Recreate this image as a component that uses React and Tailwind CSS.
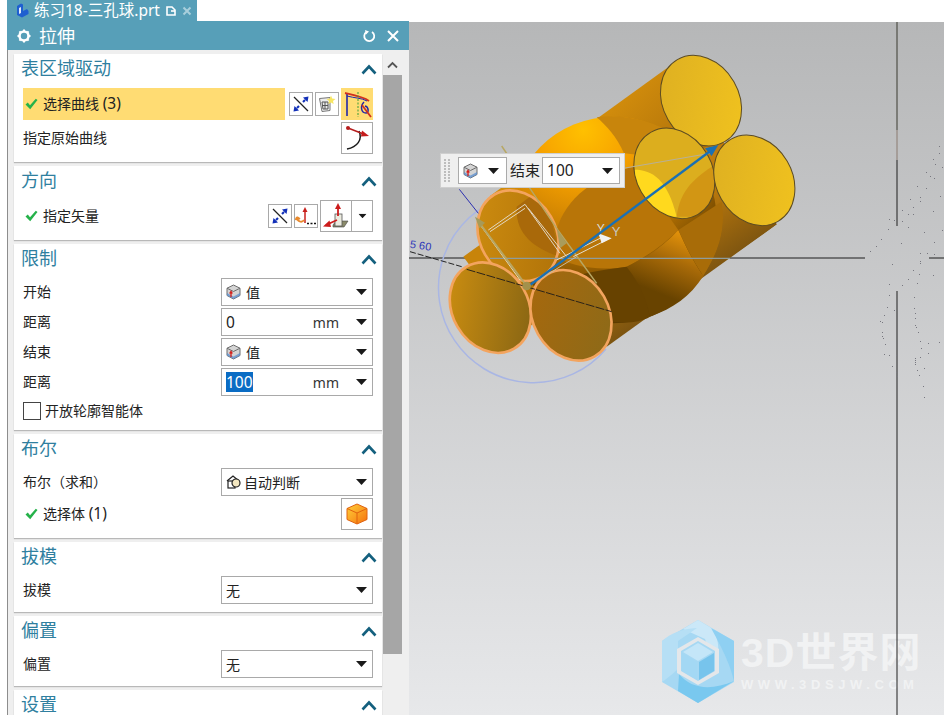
const FONT = { fontFamily: '"Noto Sans","Noto Sans CJK SC",sans-serif' };

function Caret({ className = "" }) {
  return (
    <svg width="11" height="6" viewBox="0 0 11 6" className={className}>
      <path d="M0 0H11L5.5 6Z" fill="#1a1a1a" />
    </svg>
  );
}
function Chevron() {
  return (
    <svg width="16" height="11" viewBox="0 0 16 11">
      <path d="M1.5 9.5L8 2.5L14.5 9.5" fill="none" stroke="#14607e" strokeWidth="2.6" />
    </svg>
  );
}
function Check() {
  return (
    <svg width="13" height="12" viewBox="0 0 13 12" className="shrink-0">
      <path d="M0.5 6.5L2.8 4.6L5 7.2L10.8 0.8L12.5 2L5.2 11.2Z" fill="#25b24a" />
    </svg>
  );
}
function ValueCube() {
  return (
    <svg width="15" height="16" viewBox="0 0 15 16" className="shrink-0">
      <path d="M7.5 1L14 4.2V11.5L7.5 15L1 11.5V4.2Z" fill="#d4d4d4" stroke="#6d6d6d" />
      <path d="M1 4.2L7.5 7.5L14 4.2" fill="none" stroke="#6d6d6d" />
      <path d="M1 11.5L7.5 15L14 11.5L14 9L7.5 12.5L1 9Z" fill="#5b8fd0" opacity="0.75" />
      <path d="M5 13V8M3.6 9.5L5 7.5L6.4 9.5" fill="none" stroke="#d3201c" strokeWidth="1.3" />
    </svg>
  );
}
function ReverseIcon() {
  return (
    <svg width="18" height="18" viewBox="0 0 18 18">
      <path d="M2 2L16 16" stroke="#222" strokeWidth="1.2" />
      <path d="M11 7L13 5" stroke="#1230b8" strokeWidth="2.2" />
      <path d="M7 11L5 13" stroke="#1230b8" strokeWidth="2.2" />
      <path d="M16.5 1.5L15.5 7L11 2.5Z" fill="#1230b8" />
      <path d="M1.5 16.5L2.5 11L7 15.5Z" fill="#1230b8" />
    </svg>
  );
}
function CurveStarIcon() {
  return (
    <svg width="18" height="18" viewBox="0 0 18 18">
      <path d="M1.5 3.5L12 2.5V15.5L4 16.5Z" fill="#ececec" stroke="#777" />
      <path d="M4 7H10V14H5ZM7 7V14M4.5 10.5H10" fill="none" stroke="#555" />
      <path d="M13 0.5L14.2 3.5L17.5 4L15 6L15.7 9L13 7.4L10.3 9L11 6L8.5 4L11.8 3.5Z" fill="#f7e663" />
    </svg>
  );
}
function CurveSelectIcon() {
  return (
    <svg width="30" height="30" viewBox="0 0 30 30">
      <path d="M5 4V27" stroke="#2227a8" strokeWidth="1.6" />
      <path d="M3 4C12 6 22 8 27 12" fill="none" stroke="#d0301f" strokeWidth="1.8" />
      <path d="M5 7C12 9 20 9 25 12" fill="none" stroke="#2227a8" strokeWidth="1" />
      <path d="M16 3V28" stroke="#3b9b38" strokeWidth="1" strokeDasharray="2 1.5" />
      <path d="M22 13C18 17 19 24 24 24C27 24 27 18 23 17" fill="none" stroke="#2227a8" strokeWidth="1.5" />
      <path d="M20 16L29 28" stroke="#d0301f" strokeWidth="1.8" />
    </svg>
  );
}
function OriginCurveIcon() {
  return (
    <svg width="30" height="30" viewBox="0 0 30 30">
      <path d="M5 26C15 24 21 17 17 8" fill="none" stroke="#1c1c1c" strokeWidth="1.5" />
      <path d="M6 5L24 12" stroke="#b51c1c" strokeWidth="1.5" />
      <circle cx="6" cy="5" r="2" fill="#b51c1c" />
      <path d="M20 7.5L27 13L19 13.5Z" fill="#c51c1c" />
    </svg>
  );
}
function InferIcon() {
  return (
    <svg width="22" height="22" viewBox="0 0 22 22">
      <path d="M10 18V4" stroke="#c8201c" strokeWidth="1.5" />
      <path d="M7.5 7L10 2L12.5 7Z" fill="#c8201c" />
      <path d="M2 12C2 17 7 18 9 15M2 12L0.5 15M2 12L5 14" fill="none" stroke="#e8892c" strokeWidth="1.8" />
      <path d="M12 18.5H14M15.5 18.5H17.5M19 18.5H21" stroke="#111" strokeWidth="1.6" />
    </svg>
  );
}
function VectorIcon() {
  return (
    <svg width="28" height="28" viewBox="0 0 28 28">
      <path d="M11 23L14 19H26L22 25H11Z" fill="#8a8a6a" stroke="#444" strokeWidth="0.6" />
      <rect x="13" y="12" width="7" height="12" fill="#ecece0" stroke="#555" strokeWidth="0.8" />
      <path d="M16 14V3" stroke="#cc1c1c" strokeWidth="1.8" />
      <path d="M13 7L16 1L19 7Z" fill="#cc1c1c" />
      <path d="M15 18L4 23" stroke="#cc1c1c" strokeWidth="1.8" />
      <path d="M7.5 18.5L1 24.5L9 25Z" fill="#cc1c1c" />
    </svg>
  );
}
function BoolIcon() {
  return (
    <svg width="15" height="16" viewBox="0 0 15 16" className="shrink-0">
      <path d="M1 7L7 2L13 7V9" fill="none" stroke="#222" strokeWidth="1.3" />
      <rect x="2" y="7" width="7" height="7" fill="#fff" stroke="#222" strokeWidth="1.2" />
      <circle cx="10" cy="9" r="4" fill="#f3e7c0" stroke="#222" strokeWidth="1.2" />
    </svg>
  );
}
function OrangeCube() {
  return (
    <svg width="24" height="24" viewBox="0 0 24 24">
      <defs>
        <linearGradient id="oc" x1="0" y1="0" x2="1" y2="1">
          <stop offset="0" stopColor="#ffd23a" />
          <stop offset="1" stopColor="#f5700d" />
        </linearGradient>
      </defs>
      <path d="M12 2L22 6.5V17.5L12 22L2 17.5V6.5Z" fill="url(#oc)" stroke="#e0620f" strokeLinejoin="round" />
      <path d="M2 6.5L12 11L22 6.5M12 11V22" fill="none" stroke="#e0620f" />
    </svg>
  );
}

function Btn({ children, w = "w-6", h = "h-6" }) {
  return (
    <div className={`${w} ${h} border border-[#a9a9a9] bg-white flex items-center justify-center shrink-0`}>
      {children}
    </div>
  );
}

function Select({ children, unit }) {
  return (
    <div className="w-[152px] h-[28px] border border-[#a9a9a9] bg-white flex items-center pl-[4px] pr-[5px] shrink-0 text-[14px] text-[#222]">
      <div className="flex items-center gap-[5px] flex-1 min-w-0">{children}</div>
      {unit && <span className="mr-[17px] text-[#333]">{unit}</span>}
      <Caret />
    </div>
  );
}

function Row({ label, children }) {
  return (
    <div className="flex items-center justify-between h-[28px]">
      <span className="text-[14px] text-[#222] -translate-y-px">{label}</span>
      {children}
    </div>
  );
}

function Section({ title, children, tight }) {
  return (
    <section className={`bg-white px-[9px] shadow-[0_1px_1px_#b8b8b8] ${tight ? "pb-[4px]" : "pb-[8px]"}`}>
      <div className="h-[30px] flex items-center justify-between mb-[4px] -mr-[4px]">
        <span className="text-[18px] text-[#2f7f9f] -ml-[2px] -translate-y-px">{title}</span>
        <Chevron />
      </div>
      {children}
    </section>
  );
}

function Panel() {
  return (
    <div className="w-[409px] shrink-0 flex flex-col bg-white">
      <div className="h-[21px] flex">
        <div className="w-[190px] ml-[7px] bg-[#579fb8] flex items-center pl-[8px] text-white text-[15.5px]">
          <svg width="14" height="15" viewBox="0 0 14 15" className="shrink-0">
            <path d="M2 3L6 0.5L8 1.5V8L12 6L13.5 8V11L7 14.5L2 12Z" fill="#1f5fd0" />
            <path d="M4 5L6 4V10L4 11Z" fill="#dfe9fb" />
          </svg>
          <span className="ml-[5px] leading-none whitespace-nowrap">练习18-三孔球.prt</span>
          <svg width="10" height="10" viewBox="0 0 10 10" className="ml-[6px] shrink-0">
            <path d="M1 1H6L9 4V9H1Z" fill="none" stroke="#fff" strokeWidth="1.6" />
            <path d="M5 5H9" stroke="#fff" strokeWidth="1.6" />
          </svg>
          <svg width="10" height="10" viewBox="0 0 10 10" className="ml-[6px] shrink-0">
            <path d="M1.5 1.5L8.5 8.5M8.5 1.5L1.5 8.5" stroke="#a9cfdc" strokeWidth="2" />
          </svg>
        </div>
      </div>
      <div className="ml-[7px] h-[29px] bg-[#579fb8] flex items-center pl-[10px] pr-[10px] text-white">
        <svg width="14" height="14" viewBox="0 0 14 14" className="shrink-0">
          <circle cx="7" cy="7" r="4.5" fill="none" stroke="#fff" strokeWidth="2.6" />
          <path d="M7 0.5V2.5M7 11.5V13.5M0.5 7H2.5M11.5 7H13.5M2.4 2.4L3.8 3.8M10.2 10.2L11.6 11.6M11.6 2.4L10.2 3.8M3.8 10.2L2.4 11.6" stroke="#fff" strokeWidth="2" />
        </svg>
        <span className="ml-[8px] text-[18px] leading-none">拉伸</span>
        <div className="flex-1" />
        <svg width="14" height="14" viewBox="0 0 14 14" className="shrink-0 mr-[11px]">
          <path d="M4.5 3A5 5 0 1 0 10 3" fill="none" stroke="#fff" strokeWidth="1.8" />
          <path d="M3 1L7 2.5L4 5.5Z" fill="#fff" />
        </svg>
        <svg width="12" height="12" viewBox="0 0 12 12" className="shrink-0">
          <path d="M1 1L11 11M11 1L1 11" stroke="#fff" strokeWidth="2" />
        </svg>
      </div>
      <div className="ml-[7px] h-[665px] overflow-hidden bg-[#efefef] border-l border-[#8d8d8d] flex">
        <div className="w-[368px] ml-[6px] mt-[4px] flex flex-col gap-[4px] shrink-0">
          <Section title="表区域驱动">
            <div className="flex items-center h-[32px]">
              <div className="w-[262px] h-[32px] bg-[#ffdc73] flex items-center pl-[2px] gap-[5px] text-[14px] text-[#222]">
                <Check />
                <span>选择曲线 <span className="text-[15.5px]">(3)</span></span>
              </div>
              <div className="ml-[4px]"><Btn><ReverseIcon /></Btn></div>
              <div className="ml-[2px]"><Btn><CurveStarIcon /></Btn></div>
              <div className="ml-[2px] w-[32px] h-[32px] bg-[#ffdc73] flex items-center justify-center"><CurveSelectIcon /></div>
            </div>
            <div className="flex items-center justify-between h-[32px] mt-[2px]">
              <span className="text-[14px] text-[#222] -translate-y-px">指定原始曲线</span>
              <Btn w="w-[32px]" h="h-[32px]"><OriginCurveIcon /></Btn>
            </div>
          </Section>
          <Section title="方向">
            <div className="flex items-center h-[32px]">
              <div className="flex items-center gap-[5px] pl-[2px] text-[14px] text-[#222] flex-1">
                <Check />
                <span className="-translate-y-px">指定矢量</span>
              </div>
              <Btn><ReverseIcon /></Btn>
              <div className="ml-[2px]"><Btn><InferIcon /></Btn></div>
              <div className="ml-[2px] flex">
                <Btn w="w-[32px]" h="h-[32px]"><VectorIcon /></Btn>
                <div className="w-[22px] h-[32px] -ml-px border border-[#a9a9a9] flex items-center justify-center"><Caret className="scale-75" /></div>
              </div>
            </div>
          </Section>
          <Section title="限制" tight>
            <div className="flex flex-col gap-[2px]">
              <Row label="开始"><Select><ValueCube /><span>值</span></Select></Row>
              <Row label="距离"><Select unit="mm"><span className="text-[15.5px] leading-[20px]">0</span></Select></Row>
              <Row label="结束"><Select><ValueCube /><span>值</span></Select></Row>
              <Row label="距离"><Select unit="mm"><span className="bg-[#0a6cc4] text-white text-[15.5px] leading-[20px]">100</span></Select></Row>
            </div>
            <div className="h-[30px] flex items-center text-[14px] text-[#222]">
              <div className="w-[18px] h-[18px] border border-[#444] bg-white mr-[4px]" />
              <span className="-translate-y-px">开放轮廓智能体</span>
            </div>
          </Section>
          <Section title="布尔">
            <Row label="布尔（求和）"><Select><BoolIcon /><span className="-ml-[2px]">自动判断</span></Select></Row>
            <div className="flex items-center justify-between h-[32px] mt-[2px]">
              <div className="flex items-center gap-[5px] pl-[2px] text-[14px] text-[#222]">
                <Check />
                <span>选择体 <span className="text-[15.5px]">(1)</span></span>
              </div>
              <Btn w="w-[32px]" h="h-[32px]"><OrangeCube /></Btn>
            </div>
          </Section>
          <Section title="拔模">
            <Row label="拔模"><Select><span>无</span></Select></Row>
          </Section>
          <Section title="偏置">
            <Row label="偏置"><Select><span>无</span></Select></Row>
          </Section>
          <Section title="设置">
            <div className="h-[28px]" />
          </Section>
        </div>
        <div className="w-[26px] ml-[1px] shrink-0 flex flex-col">
          <div className="h-[21px] mt-[4px] w-[19px] flex items-center justify-center">
            <svg width="11" height="8" viewBox="0 0 11 8">
              <path d="M1 6.5L5.5 2L10 6.5" fill="none" stroke="#555" strokeWidth="1.8" />
            </svg>
          </div>
          <div className="w-[19px] h-[579px] bg-[#a6a6a6]" />
        </div>
      </div>
    </div>
  );
}

const DOTS = [
  [939,146],[939,153],[933,159],[935,164],[942,167],[926,172],[930,176],[934,178],[917,186],[926,188],[920,197],[920,201],[910,199],[940,196],
  [913,207],[902,210],[913,214],[908,214],[933,211],[894,220],[889,219],[902,221],[908,227],[888,229],[924,232],[942,230],[881,239],[876,246],[901,243],[934,242],[870,251],[920,253],[927,253],[934,254],
  [920,261],[920,263],[892,264],[913,270],[919,274],[908,279],[933,275],[917,283],[889,284],[902,285],[889,295],[914,297],[887,307],[884,315],[880,321],[882,322],[882,332],[882,336],[883,338],
  [894,310],[914,308],[915,313],[915,318],[915,325],[916,327],[918,332],[920,341],[921,348],[920,357],[924,368],[919,375],[884,354],[885,344],[889,355],[896,355],[892,366],[896,372],[897,376],[915,358],[915,360],[915,362],[915,364],
  [917,370],[923,386],[924,397],[928,343],[928,353],[939,342]
];

const ELL = { rx: 114, ry: 142 };
const rot = (x, y) => `rotate(-30 ${x} ${y})`;

function Scene() {
  return (
    <svg width="535" height="693" viewBox="409 22 535 693" className="absolute inset-0">
      <defs>
        <linearGradient id="b1" gradientUnits="userSpaceOnUse" x1="600" y1="200" x2="800" y2="400">
          <stop offset="0" stopColor="#d18c0c" />
          <stop offset="1" stopColor="#ad700a" />
        </linearGradient>
        <linearGradient id="b2" gradientUnits="userSpaceOnUse" x1="400" y1="600" x2="620" y2="920">
          <stop offset="0" stopColor="#c8840a" />
          <stop offset="1" stopColor="#6f4806" />
        </linearGradient>
        <linearGradient id="b3" gradientUnits="userSpaceOnUse" x1="900" y1="430" x2="1030" y2="620">
          <stop offset="0" stopColor="#c07c0c" />
          <stop offset="1" stopColor="#7c5410" />
        </linearGradient>
        <radialGradient id="sph" gradientUnits="userSpaceOnUse" cx="520" cy="270" r="590">
          <stop offset="0" stopColor="#ffc000" />
          <stop offset="0.25" stopColor="#f6a100" />
          <stop offset="0.55" stopColor="#c27a04" />
          <stop offset="0.85" stopColor="#6a4300" />
          <stop offset="1" stopColor="#5c3b00" />
        </radialGradient>
        <linearGradient id="lowband" gradientUnits="userSpaceOnUse" x1="810" y1="580" x2="720" y2="800">
          <stop offset="0" stopColor="#e0900a" />
          <stop offset="0.35" stopColor="#a86a08" />
          <stop offset="0.8" stopColor="#684300" />
        </linearGradient>
        <linearGradient id="y1" x1="0" y1="0" x2="1" y2="1">
          <stop offset="0" stopColor="#dcae22" />
          <stop offset="1" stopColor="#f2c41e" />
        </linearGradient>
        <linearGradient id="n1" x1="0" y1="0" x2="1" y2="1">
          <stop offset="0" stopColor="#cf8e10" />
          <stop offset="1" stopColor="#ad7008" />
        </linearGradient>
        <linearGradient id="n2" x1="0" y1="0" x2="1" y2="1">
          <stop offset="0" stopColor="#d39210" />
          <stop offset="1" stopColor="#7f6014" />
        </linearGradient>
        <linearGradient id="n3" x1="0" y1="0" x2="0.7" y2="1">
          <stop offset="0" stopColor="#a9680c" />
          <stop offset="1" stopColor="#8e6a18" />
        </linearGradient>
        <clipPath id="e2clip">
          <ellipse cx="793" cy="400" rx={ELL.rx} ry={ELL.ry} transform={rot(793, 400)} />
        </clipPath>
        <clipPath id="n1clip">
          <ellipse cx="324" cy="587" rx={ELL.rx} ry={ELL.ry} transform={rot(324, 587)} />
        </clipPath>
      </defs>

      <path d="M409 258H865M929 258H944" stroke="#1c1c1c" strokeWidth="1" />
      <path d="M897 22V130" stroke="#3a3a30" strokeWidth="1" />
      <path d="M897 130V160" stroke="#8a7a70" strokeWidth="1" />
      <path d="M897 160V226M897 291V715" stroke="#1f1f1f" strokeWidth="1" />
      {DOTS.map(([x, y], i) => (
        <rect key={i} x={x} y={y} width="1" height="1" fill="#77777f" />
      ))}

      <path d="M505 197A95 95 0 1 0 606 349" fill="none" stroke="#a9b6e4" strokeWidth="1.5" />

      <g transform="translate(410 40) scale(0.33333)">
        <polygon points="240,468 770,85 935,300 480,700" fill="url(#b1)" />
        <polygon points="160,650 690,270 860,500 330,880" fill="url(#b2)" />
        <polygon points="400,670 930,290 1100,553 590,920" fill="url(#b3)" />
        <circle cx="610" cy="540" r="310" fill="url(#sph)" />

        <path d="M560 232C630 220 730 240 795 285L690 345L642 340C620 290 590 258 560 232Z" fill="#c8850c" />
        <path d="M440 570C465 475 560 405 670 380L805 570C760 615 710 650 650 680C570 695 470 680 425 640Z" fill="#b87508" />
        <path d="M805 570C830 625 850 665 880 708C840 770 790 805 720 830C705 770 685 725 650 680C705 655 760 620 805 570Z" fill="url(#lowband)" />
        <path d="M425 730C500 700 580 690 650 680C690 730 710 780 720 830C670 860 570 850 500 810C460 785 440 760 425 730Z" fill="#674200" />
        <path d="M805 570L935 485C948 560 930 630 880 708C850 665 830 625 805 570Z" fill="#a86c08" />
        <path d="M880 708L1100 553L1000 420L935 485C948 560 930 630 880 708Z" fill="url(#b3)" />

        <ellipse cx="873" cy="182" rx={ELL.rx} ry={ELL.ry} transform={rot(873, 182)} fill="url(#y1)" stroke="#5d4c22" strokeWidth="3" />
        <ellipse cx="793" cy="400" rx={ELL.rx} ry={ELL.ry} transform={rot(793, 400)} fill="#dcae1e" />
        <g clipPath="url(#e2clip)">
          <path d="M660 390C720 385 770 410 800 530L660 530Z" fill="#ffd91e" />
          <path d="M920 370C860 410 810 445 800 530L920 530Z" fill="#d29614" />
        </g>
        <ellipse cx="793" cy="400" rx={ELL.rx} ry={ELL.ry} transform={rot(793, 400)} fill="none" stroke="#5d4c22" strokeWidth="3" />
        <ellipse cx="1033" cy="421" rx={ELL.rx} ry={ELL.ry} transform={rot(1033, 421)} fill="url(#y1)" stroke="#5d4c22" strokeWidth="3" />

        <ellipse cx="324" cy="587" rx={ELL.rx} ry={ELL.ry} transform={rot(324, 587)} fill="url(#n1)" />
        <g clipPath="url(#n1clip)">
          <path d="M320 500C315 580 370 625 450 650L400 440Z" fill="#a9690a" />
        </g>
        <ellipse cx="324" cy="587" rx={ELL.rx} ry={ELL.ry} transform={rot(324, 587)} fill="none" stroke="#f3a45e" strokeWidth="8" />
        <ellipse cx="241" cy="803" rx={ELL.rx} ry={ELL.ry} transform={rot(241, 803)} fill="url(#n2)" stroke="#f3a45e" strokeWidth="8" />
        <ellipse cx="483" cy="826" rx={ELL.rx} ry={ELL.ry} transform={rot(483, 826)} fill="url(#n3)" stroke="#f3a45e" strokeWidth="8" />

        <path d="M240 655H960" stroke="#8e9c9c" strokeWidth="3.5" />
        <path d="M0 635L155 680" stroke="#222" strokeWidth="3" strokeDasharray="18 6" />
        <path d="M170 688L605 815" stroke="#2a2218" strokeWidth="3" strokeDasharray="27 4" />
        <path d="M148 448L205 520" stroke="#2b2fb0" strokeWidth="3" />

        <path d="M235 570L345 493L450 640M355 505L470 650M200 540L330 720M240 575L345 505" fill="none" stroke="#e3d8c4" strokeWidth="3" />
        <path d="M350 738L205 545" stroke="#b7a764" strokeWidth="6" />
        <path d="M195 530L225 548L208 565Z" fill="#a79a58" />
        <path d="M560 730L440 565L275 318" fill="none" stroke="#b7a764" strokeWidth="4.5" />
        <path d="M440 565L470 610L450 625Z" fill="#a99c5c" />
        <path d="M360 735L500 650" stroke="#c7bda0" strokeWidth="3" />
        <path d="M440 660L580 590M490 650L600 595" stroke="#e2ddd0" strokeWidth="3" />
        <path d="M565 580L605 595L575 610Z" fill="#f1f1f1" />
        <text x="560" y="580" fontSize="36" fill="#dcdcd4" fontFamily="Liberation Sans">Y</text>
        <text x="605" y="588" fontSize="39" fill="#c8c8c0" fontFamily="Liberation Sans">Y</text>

        <path d="M900 340L640 385" stroke="#b8b098" strokeWidth="3" />
        <path d="M360 735L905 330" stroke="#1a70b4" strokeWidth="7" />
        <path d="M885 325L925 315L905 348Z" fill="#1a70b4" />
        <circle cx="350" cy="738" r="13" fill="#a3914c" />
      </g>
      <text x="410" y="249" fontSize="11" fill="#2b34b8" fontFamily="Liberation Sans" transform="rotate(8 418 245)">5 60</text>
    </svg>
  );
}

function Watermark() {
  return (
    <div className="absolute left-[252px] top-[597px] flex items-center gap-[6px]">
      <svg width="74" height="84" viewBox="0 0 74 84" className="shrink-0">
        <path d="M37 1L73 22V63L37 84L1 63V22Z" fill="#a6d8f3" />
        <path d="M37 1L52 10C60 26 58 36 52 44L44 20L22 10Z" fill="#cbe8f8" />
        <path d="M50 9L73 22V62C70 50 66 38 50 9Z" fill="#8fd0f2" />
        <path d="M18 55C30 70 50 72 73 62L37 84L17 72Z" fill="#79c8ef" />
        <path d="M1 22C10 14 20 10 36 9L17 22V50C12 55 5 60 1 63Z" fill="#b6dff5" />
        <path d="M37 18L58 30V54L37 66L16 54V30Z" fill="#e4e7ea" />
        <path d="M37 22L54 32V52L37 62L20 52V32Z" fill="#a6d8f3" />
        <path d="M37 24L52 33L37 42L22 33Z" fill="#c4e6f8" />
        <path d="M21 34L36 43V61L21 52Z" fill="#a3d8f4" />
        <path d="M38 43L53 34V52L38 61Z" fill="#77c4ec" />
      </svg>
      <div className="flex flex-col text-[#f1f2f3] leading-none">
        <span className="text-[41px] font-bold tracking-[1px] leading-[44px] whitespace-nowrap" style={{ fontFamily: '"Liberation Sans","Noto Sans CJK SC",sans-serif' }}>3D世界网</span>
        <span className="text-[13px] font-bold tracking-[4.6px] mt-[3px] whitespace-nowrap" style={{ fontFamily: '"Liberation Sans",sans-serif' }}>WWW.3DSJW.COM</span>
      </div>
    </div>
  );
}

function Popup() {
  return (
    <div className="absolute left-[31px] top-[131px] w-[185px] h-[35px] bg-[#efefef] border border-[#cfcfcf] flex items-center pl-[3px] text-[15px] text-[#222]">
      <div className="grid grid-cols-2 gap-[1px] shrink-0 w-[7px]">
        {Array.from({ length: 16 }).map((_, i) => (
          <div key={i} className="w-[2px] h-[2px] bg-[#bdbdbd]" />
        ))}
      </div>
      <div className="ml-[7px] w-[49px] h-[27px] bg-white border border-[#aaaaaa] flex items-center pl-[4px] pr-[7px] justify-between shrink-0">
        <ValueCube />
        <Caret />
      </div>
      <span className="ml-[3px] shrink-0">结束</span>
      <div className="ml-[2px] w-[78px] h-[27px] bg-white border border-[#aaaaaa] flex items-center pl-[4px] pr-[6px] justify-between shrink-0">
        <span className="text-[15.5px]">100</span>
        <Caret />
      </div>
    </div>
  );
}

export default function App() {
  return (
    <div className="w-[944px] h-[715px] overflow-hidden flex bg-white" style={FONT}>
      <Panel />
      <div className="relative flex-1 h-[693px] mt-[22px] bg-gradient-to-b from-[#b6b7b8] to-[#e7e8ea]">
        <Watermark />
        <Scene />
        <Popup />
      </div>
    </div>
  );
}
